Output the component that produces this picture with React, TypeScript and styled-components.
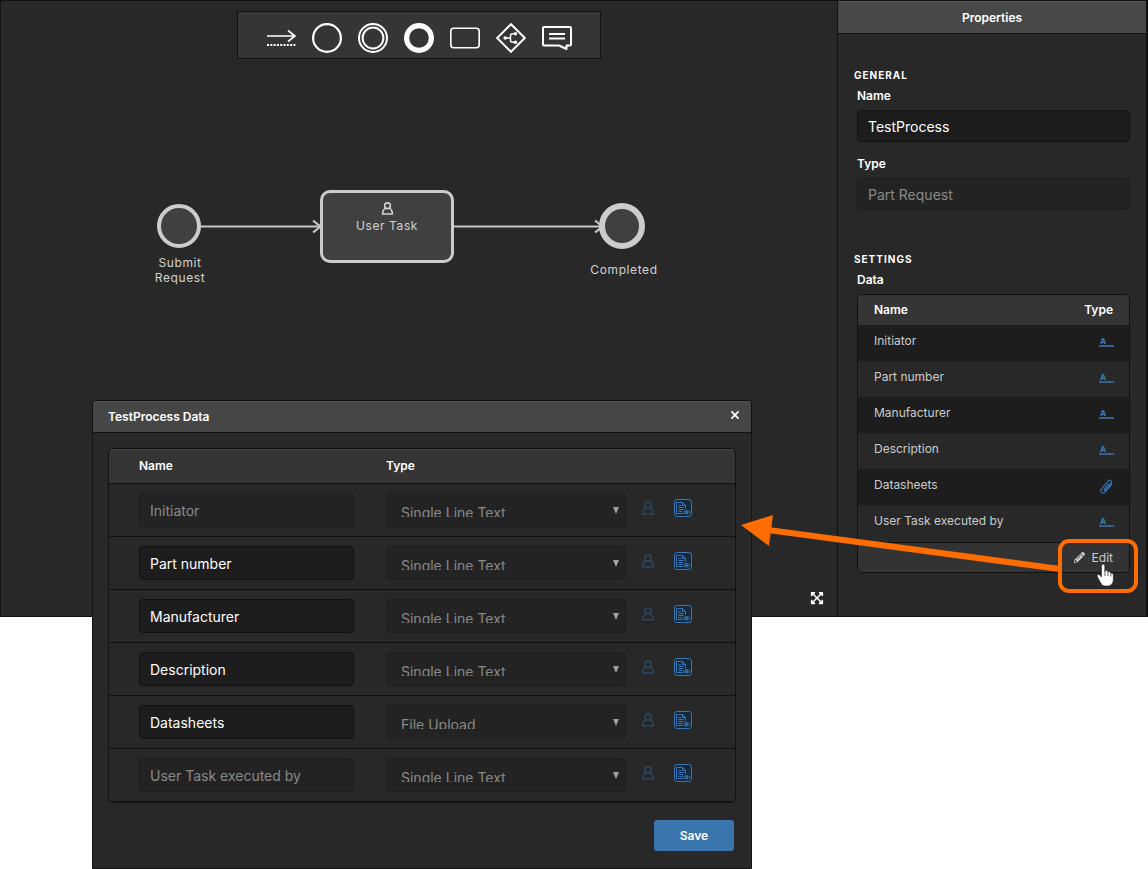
import React from "react";
import styled, { createGlobalStyle, css } from "styled-components";
import { FaExpandArrowsAlt, FaPencilAlt } from "react-icons/fa";

const GlobalStyle = createGlobalStyle`
  * { box-sizing: border-box; }
  body {
    margin: 0;
    background: #fff;
    color: #fff;
    font-family: Inter, "Liberation Sans", sans-serif;
    font-size: 12px;
    line-height: 20px;
  }
  button, input, select { font: inherit; color: inherit; margin: 0; }
  button { cursor: pointer; }
`;

const Page = styled.div`
  position: relative;
  min-width: 1100px;
  min-height: 869px;
`;

const Editor = styled.div`
  display: grid;
  grid-template-columns: 1fr 309px;
  background: #282828;
  border: 1px solid #111;
  border-right-width: 2px;
`;

const Canvas = styled.main`
  position: relative;
  padding-top: 10px;
`;

const Toolbar = styled.div`
  position: relative;
  display: flex;
  justify-content: center;
  gap: 16px;
  width: 364px;
  height: 48px;
  margin: 0 auto;
  padding-top: 10px;
  background: #353535;
  border: 1px solid #111;
`;

const ToolButton = styled.button`
  display: block;
  width: 30px;
  height: 32px;
  padding: 0;
  border: 0;
  background: none;
  color: #fff;
  svg { display: block; }
`;

const Edges = styled.svg`
  position: absolute;
  inset: 0;
  width: 100%;
  height: 100%;
  pointer-events: none;
`;

const nodeText = css`
  color: #d2d2d2;
  font-size: 12px;
  line-height: 15px;
  letter-spacing: 0.05em;
  text-align: center;
`;

const EventNode = styled.div<{ $x: number; $y: number; $size: number; $line: number }>`
  position: absolute;
  left: ${(p) => p.$x}px;
  top: ${(p) => p.$y}px;
  width: ${(p) => p.$size}px;
  height: ${(p) => p.$size}px;
  border: ${(p) => p.$line}px solid #ccc;
  border-radius: 50%;
  background: #404040;
`;

const NodeLabel = styled.div<{ $x: number; $y: number; $width: number }>`
  position: absolute;
  left: ${(p) => p.$x}px;
  top: ${(p) => p.$y}px;
  width: ${(p) => p.$width}px;
  ${nodeText}
`;

const TaskNode = styled.div`
  position: absolute;
  left: 319px;
  top: 189px;
  display: flex;
  flex-direction: column;
  align-items: center;
  gap: 3px;
  width: 134px;
  height: 73px;
  padding-top: 9px;
  border: 3px solid #ccc;
  border-radius: 10px;
  background: #404040;
  ${nodeText}
`;

const ExpandButton = styled.button`
  position: absolute;
  right: 13px;
  bottom: 11px;
  width: 14px;
  height: 14px;
  padding: 0;
  border: 0;
  background: none;
  color: #fff;
  svg { display: block; }
`;

const Panel = styled.aside`
  border-left: 1px solid #111;
`;

const PanelTitle = styled.h2`
  margin: 0;
  height: 33px;
  padding-top: 6px;
  border-top: 1px solid #555;
  border-bottom: 1px solid #111;
  background: #484848;
  font-size: 12px;
  line-height: 20px;
  font-weight: 600;
  text-align: center;
`;

const PanelBody = styled.div`
  display: flex;
  flex-direction: column;
  gap: 42px;
  padding: 34px 16px 43px;
`;

const Section = styled.section`
  display: flex;
  flex-direction: column;
`;

const SectionTitle = styled.h3`
  margin: 0 0 4px;
  font-size: 10px;
  line-height: 14px;
  font-weight: 700;
  letter-spacing: 1px;
  text-transform: uppercase;
`;

const Field = styled.div`
  display: flex;
  flex-direction: column;
  gap: 4px;
  padding-left: 3px;
  font-weight: 600;
  & + & { margin-top: 12px; }
`;

const TextInput = styled.input<{ $tall?: boolean }>`
  display: block;
  width: 100%;
  height: ${(p) => (p.$tall ? 34 : 32)}px;
  padding: 0 10px;
  border: 1px solid #111;
  border-radius: 4px;
  outline: 0;
  background: #1d1d1d;
  color: #fff;
  font-size: 14px;
  font-weight: 400;
  &:disabled {
    border-color: #1e1e1e;
    background: #232323;
    color: #8a8a8a;
  }
`;

const Frame = styled.div`
  border: 1px solid #111;
  border-radius: 5px;
  overflow: hidden;
`;

const SummaryTable = styled.table`
  width: 100%;
  border-spacing: 0;
  th {
    height: 30px;
    padding: 0 16px;
    background: #353535;
    font-weight: 600;
    text-align: left;
  }
  td {
    height: 36px;
    padding: 0 16px 4px;
    color: #ccc;
    font-weight: 400;
  }
  td:last-child { padding-right: 15px; }
  th:last-child { text-align: right; }
  tbody tr:nth-child(odd) { background: #1d1d1d; }
  tbody tr:last-child td { height: 37px; padding-bottom: 5px; }
`;

const TypeCell = styled.div`
  display: flex;
  justify-content: flex-end;
  padding-top: 2px;
  color: #3a76b4;
`;

const TextGlyph = styled.span`
  display: block;
  width: 15px;
  height: 10px;
  border-bottom: 2px solid #3b5f8f;
  padding-left: 1px;
  color: #3a76b4;
  font-size: 8px;
  line-height: 8px;
  font-weight: 800;
`;

const SummaryFooter = styled.div`
  display: flex;
  justify-content: flex-end;
  height: 30px;
  border-top: 1px solid #111;
  background: #333;
`;

const EditButton = styled.button`
  display: flex;
  align-items: center;
  gap: 7px;
  padding: 0 16px;
  border: 0;
  background: none;
  color: #ccc;
  font-size: 12px;
  font-weight: 400;
`;

const Dialog = styled.div`
  position: absolute;
  left: 92px;
  top: 400px;
  width: 660px;
  border: 1px solid #111;
  border-radius: 4px 4px 0 0;
  background: #282828;
  overflow: hidden;
`;

const DialogHeader = styled.header`
  display: flex;
  align-items: center;
  justify-content: space-between;
  height: 32px;
  padding: 0 10px 0 15px;
  border-top: 1px solid #555;
  border-bottom: 1px solid #111;
  background: #464646;
`;

const DialogTitle = styled.h2`
  margin: 0;
  font-size: 12px;
  line-height: 20px;
  font-weight: 600;
`;

const CloseButton = styled.button`
  display: block;
  padding: 0 0 4px;
  border: 0;
  background: none;
  color: #fff;
  svg { display: block; }
`;

const DialogBody = styled.div`
  padding: 15px 15px 17px;
`;

const DataTable = styled.table`
  width: 100%;
  border-spacing: 0;
  table-layout: fixed;
  th {
    height: 35px;
    padding: 0 15px 2px;
    border-top: 1px solid #444;
    border-bottom: 1px solid #111;
    background: #353535;
    font-weight: 600;
    text-align: left;
  }
  td {
    padding: 9px 15px;
    border-bottom: 1px solid #111;
  }
  th:first-child { padding-left: 30px; }
  td:first-child { padding-left: 30px; padding-right: 17px; }
  td:last-child { padding: 0 0 4px; }
`;

const NameColumn = styled.col`
  width: 262px;
`;

const TypeColumn = styled.col`
  width: 270px;
`;

const SelectBox = styled.div`
  position: relative;
  svg {
    position: absolute;
    right: 7px;
    top: 14px;
    pointer-events: none;
  }
`;

const Select = styled.select`
  display: block;
  width: 100%;
  height: 34px;
  padding: 10px 14px 9px;
  appearance: none;
  border: 1px solid #1e1e1e;
  border-radius: 4px;
  background: #232323;
  color: #8a8a8a;
  font-size: 14px;
  line-height: 18px;
  opacity: 1;
`;

const RowActions = styled.div`
  display: flex;
  align-items: center;
  gap: 19px;
`;

const IconButton = styled.button`
  display: block;
  padding: 0;
  border: 0;
  background: none;
  color: #3a76b4;
  svg { display: block; }
  &:disabled { color: #2a4c6b; }
`;

const DialogFooter = styled.footer`
  display: flex;
  justify-content: flex-end;
  padding: 17px 2px 0;
`;

const SaveButton = styled.button`
  width: 80px;
  height: 31px;
  padding: 0;
  border: 0;
  border-radius: 3px;
  background: #3b75ad;
  color: #fff;
  font-size: 12px;
  font-weight: 600;
`;

const Callout = styled.svg`
  position: absolute;
  right: 0;
  top: 500px;
  pointer-events: none;
`;

const UserIcon = ({ size = 14, line = 1.3 }: { size?: number; line?: number }) => (
  <svg width={size} height={size} viewBox="0 0 14 14" fill="none" stroke="currentColor" strokeWidth={line} strokeLinejoin="round">
    <circle cx="7" cy="4" r="3.1" />
    <path d="M5 6.6C3 7.6 1.9 9 1.6 12.9H12.4C12.1 9 11 7.6 9 6.6" />
  </svg>
);

const FormIcon = () => (
  <svg width="18" height="18" viewBox="0 0 18 18" fill="none" stroke="#3a76b4">
    <rect x=".5" y=".5" width="17" height="17" rx="2.6" fill="#15293d" strokeWidth="1" />
    <path d="M9 14.5H2.5V3.5H8.5L11.5 6.5V10M8.5 3.5V6.5H11.5M4.5 6.5H7M4.5 8.5H9.5M4.5 10.5H9.5M4.5 12.5H8" strokeWidth="1" />
    <path d="M9 13.3Q12.6 9.8 16.2 13.3Q12.6 16.6 9 13.3Z" fill="#15293d" strokeWidth="1" />
    <circle cx="12.6" cy="13.2" r="1.3" fill="#3a76b4" stroke="none" />
  </svg>
);

const ClipIcon = () => (
  <svg width="15" height="15" viewBox="0 0 15 15" fill="none" stroke="currentColor" strokeWidth="1.1" strokeLinecap="round" strokeLinejoin="round">
    <path d="M10 4.6L5.3 10.2C4.7 11 5.8 11.9 6.5 11.1L12 4.6C13.8 2.3 10.9 -.1 9 2.1L2.5 9.8C.2 12.7 3.9 15.7 6.3 12.9L12.9 5.1" />
  </svg>
);

const tools = [
  {
    name: "Sequence flow",
    art: (
      <>
        <path d="M1 13H28.5M22 7.5L29 13L22 18.5" strokeWidth="1.6" />
        <path d="M1 22H30" strokeWidth="1.8" strokeDasharray="2 1.3" />
      </>
    ),
  },
  { name: "Start event", art: <circle cx="15" cy="15" r="13.9" strokeWidth="2.2" /> },
  {
    name: "Intermediate event",
    art: (
      <>
        <circle cx="15" cy="15" r="14" strokeWidth="2" />
        <circle cx="15" cy="15" r="10.4" strokeWidth="2" />
      </>
    ),
  },
  { name: "End event", art: <circle cx="15" cy="15" r="12.4" strokeWidth="5.2" /> },
  { name: "Task", art: <rect x=".8" y="5.3" width="28.4" height="19.4" rx="3" strokeWidth="1.6" /> },
  {
    name: "Gateway",
    art: (
      <>
        <path d="M15 1.2L28.8 15L15 28.8L1.2 15Z" strokeWidth="2" />
        <path d="M9 15H14.5M19 10.8H16.5Q14.5 10.8 14.5 12.8V17.2Q14.5 19.2 16.5 19.2H19" strokeWidth="1.5" />
        <circle cx="9.2" cy="15" r="1.8" fill="currentColor" stroke="none" />
        <circle cx="19.4" cy="10.8" r="1.8" fill="currentColor" stroke="none" />
        <circle cx="19.4" cy="19.2" r="1.8" fill="currentColor" stroke="none" />
      </>
    ),
  },
  {
    name: "Annotation",
    art: (
      <>
        <path d="M2 4H28Q29 4 29 5V21.5Q29 22.5 28 22.5H24.5V26L17 22.5H2Q1 22.5 1 21.5V5Q1 4 2 4Z" strokeWidth="2" strokeLinejoin="round" />
        <path d="M7 11H23M7 15.5H23" strokeWidth="2" />
      </>
    ),
  },
];

type Entry = { name: string; type: "Single Line Text" | "File Upload"; locked?: boolean };

const entries: Entry[] = [
  { name: "Initiator", type: "Single Line Text", locked: true },
  { name: "Part number", type: "Single Line Text" },
  { name: "Manufacturer", type: "Single Line Text" },
  { name: "Description", type: "Single Line Text" },
  { name: "Datasheets", type: "File Upload" },
  { name: "User Task executed by", type: "Single Line Text", locked: true },
];

const Diagram = () => (
  <>
    <Edges aria-hidden="true" fill="none" stroke="#c6c6c6">
      <path d="M198 225.5H319M452 225.5H600" strokeWidth="2.2" />
      <path d="M312 219.5L319.5 225.5L312 231.5M594 219.5L601.5 225.5L594 231.5" strokeWidth="2.2" />
    </Edges>
    <EventNode $x={156} $y={203} $size={44} $line={4} />
    <NodeLabel $x={134} $y={254} $width={90}>Submit Request</NodeLabel>
    <TaskNode>
      <UserIcon size={13} line={1.7} />
      <span>User Task</span>
    </TaskNode>
    <EventNode $x={598} $y={202} $size={46} $line={6} />
    <NodeLabel $x={573} $y={261} $width={100}>Completed</NodeLabel>
  </>
);

const PropertiesPanel = () => (
  <Panel>
    <PanelTitle>Properties</PanelTitle>
    <PanelBody>
      <Section>
        <SectionTitle>General</SectionTitle>
        <Field>
          <label htmlFor="process-name">Name</label>
          <TextInput id="process-name" defaultValue="TestProcess" />
        </Field>
        <Field>
          <label htmlFor="process-type">Type</label>
          <TextInput id="process-type" defaultValue="Part Request" disabled />
        </Field>
      </Section>
      <Section>
        <SectionTitle>Settings</SectionTitle>
        <Field>
          <span>Data</span>
          <Frame>
            <SummaryTable>
              <thead>
                <tr>
                  <th scope="col">Name</th>
                  <th scope="col">Type</th>
                </tr>
              </thead>
              <tbody>
                {entries.map((entry) => (
                  <tr key={entry.name}>
                    <td>{entry.name}</td>
                    <td>
                      <TypeCell title={entry.type}>
                        {entry.type === "File Upload" ? <ClipIcon /> : <TextGlyph>A</TextGlyph>}
                      </TypeCell>
                    </td>
                  </tr>
                ))}
              </tbody>
            </SummaryTable>
            <SummaryFooter>
              <EditButton type="button">
                <FaPencilAlt size={11} />
                Edit
              </EditButton>
            </SummaryFooter>
          </Frame>
        </Field>
      </Section>
    </PanelBody>
  </Panel>
);

const DataDialog = () => (
  <Dialog role="dialog" aria-labelledby="dialog-title">
    <DialogHeader>
      <DialogTitle id="dialog-title">TestProcess Data</DialogTitle>
      <CloseButton type="button" aria-label="Close">
        <svg width="12" height="12" viewBox="0 0 12 12" stroke="currentColor" strokeWidth="1.8">
          <path d="M2.4 2.4L9.6 9.6M9.6 2.4L2.4 9.6" />
        </svg>
      </CloseButton>
    </DialogHeader>
    <DialogBody>
      <Frame>
        <DataTable>
          <colgroup>
            <NameColumn />
            <TypeColumn />
            <col />
          </colgroup>
          <thead>
            <tr>
              <th scope="col">Name</th>
              <th scope="col">Type</th>
              <th />
            </tr>
          </thead>
          <tbody>
            {entries.map((entry) => (
              <tr key={entry.name}>
                <td>
                  <TextInput $tall aria-label="Name" defaultValue={entry.name} disabled={entry.locked} />
                </td>
                <td>
                  <SelectBox>
                    <Select aria-label={`Type of ${entry.name}`} defaultValue={entry.type} disabled>
                      <option>Single Line Text</option>
                      <option>File Upload</option>
                    </Select>
                    <svg width="6" height="7" viewBox="0 0 6 7" fill="#a0a0a0">
                      <path d="M0 0H6L3 7Z" />
                    </svg>
                  </SelectBox>
                </td>
                <td>
                  <RowActions>
                    <IconButton type="button" aria-label="Assign user" disabled>
                      <UserIcon />
                    </IconButton>
                    <IconButton type="button" aria-label="Form visibility">
                      <FormIcon />
                    </IconButton>
                  </RowActions>
                </td>
              </tr>
            ))}
          </tbody>
        </DataTable>
      </Frame>
      <DialogFooter>
        <SaveButton type="button">Save</SaveButton>
      </DialogFooter>
    </DialogBody>
  </Dialog>
);

export default function App() {
  return (
    <>
      <GlobalStyle />
      <Page>
        <Editor>
          <Canvas>
            <Toolbar role="toolbar" aria-label="Elements">
              {tools.map((tool) => (
                <ToolButton key={tool.name} type="button" aria-label={tool.name}>
                  <svg width="30" height="30" viewBox="0 0 30 30" fill="none" stroke="currentColor">
                    {tool.art}
                  </svg>
                </ToolButton>
              ))}
            </Toolbar>
            <Diagram />
            <ExpandButton type="button" aria-label="Fit to screen">
              <FaExpandArrowsAlt size={14} />
            </ExpandButton>
          </Canvas>
          <PropertiesPanel />
        </Editor>
        <DataDialog />
        <Callout width="408" height="100" viewBox="740 500 408 100" aria-hidden="true">
          <path d="M1060 569L768 530" stroke="#ff6d00" strokeWidth="6" />
          <path d="M741 525L773 515L769 546Z" fill="#ff6d00" />
          <rect x="1060" y="541" width="76" height="50" rx="9" fill="none" stroke="#ff6d00" strokeWidth="4" />
          <path
            d="M1101.5 566C1101.5 563.6 1104.8 563.6 1104.8 566V571.5C1105.5 570 1107.8 570.4 1108 572C1109 571.2 1110.8 571.8 1110.9 573.2C1112 572.8 1113.3 573.6 1113.3 575V579.5C1113.3 583.5 1111 586 1107.3 586H1105.8C1103.2 586 1101.6 584.8 1100.4 582.4L1097.3 576.6C1096.5 574.8 1098.6 573.6 1099.8 575L1101.5 577Z"
            fill="#fff"
            stroke="#222"
            strokeWidth=".6"
          />
          <path d="M1105 571V576M1108 572V576M1110.9 573V576.5" stroke="#222" strokeWidth=".7" />
        </Callout>
      </Page>
    </>
  );
}
